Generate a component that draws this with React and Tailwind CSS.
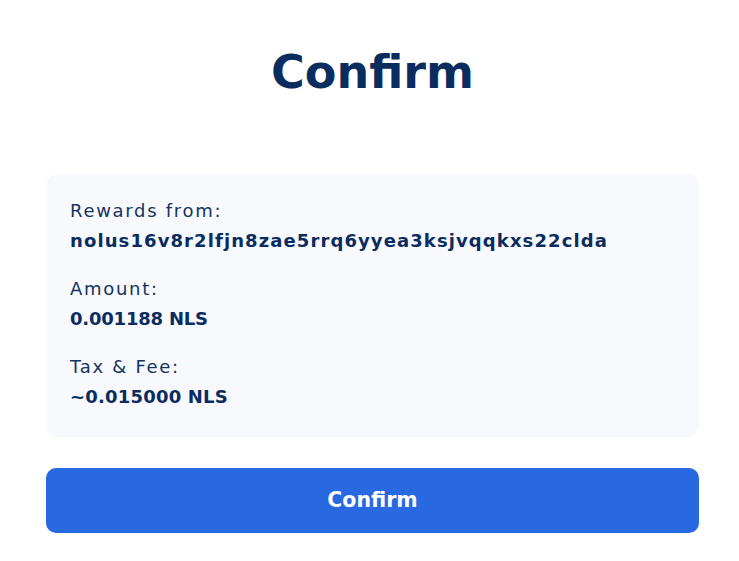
export default function App() {
  const rows = [
    { label: "Rewards from:", value: "nolus16v8r2lfjn8zae5rrq6yyea3ksjvqqkxs22clda", track: "tracking-[1.1px]" },
    { label: "Amount:", value: "0.001188 NLS", track: "tracking-[-0.2px]" },
    { label: "Tax & Fee:", value: "~0.015000 NLS", track: "tracking-[0.2px]" },
  ];
  return (
    <div
      className="min-h-[561px] w-[739px] bg-white pl-[46px] pr-[40px] pt-[46px] text-[#0a2c5e]"
      style={{ fontFamily: '"DejaVu Sans", sans-serif' }}
    >
      <h1 className="text-center text-[46px] font-bold leading-[52px]">Confirm</h1>
      <div className="mt-[76px] flex flex-col gap-[20px] rounded-[12px] bg-[#f7f9fc] px-6 pb-[26px] pt-[23px]">
        {rows.map((r) => (
          <div key={r.label} className="flex flex-col gap-[2px]">
            <div className="text-[18px] font-normal leading-[28px] tracking-[1.7px] text-[#15335f]">{r.label}</div>
            <div className={`text-[18px] font-bold leading-[28px] ${r.track}`}>{r.value}</div>
          </div>
        ))}
      </div>
      <button className="mt-[31px] flex h-[65px] w-full items-center justify-center rounded-[10px] bg-[#2868e0] text-[20.5px] font-bold text-white">
        Confirm
      </button>
    </div>
  );
}
